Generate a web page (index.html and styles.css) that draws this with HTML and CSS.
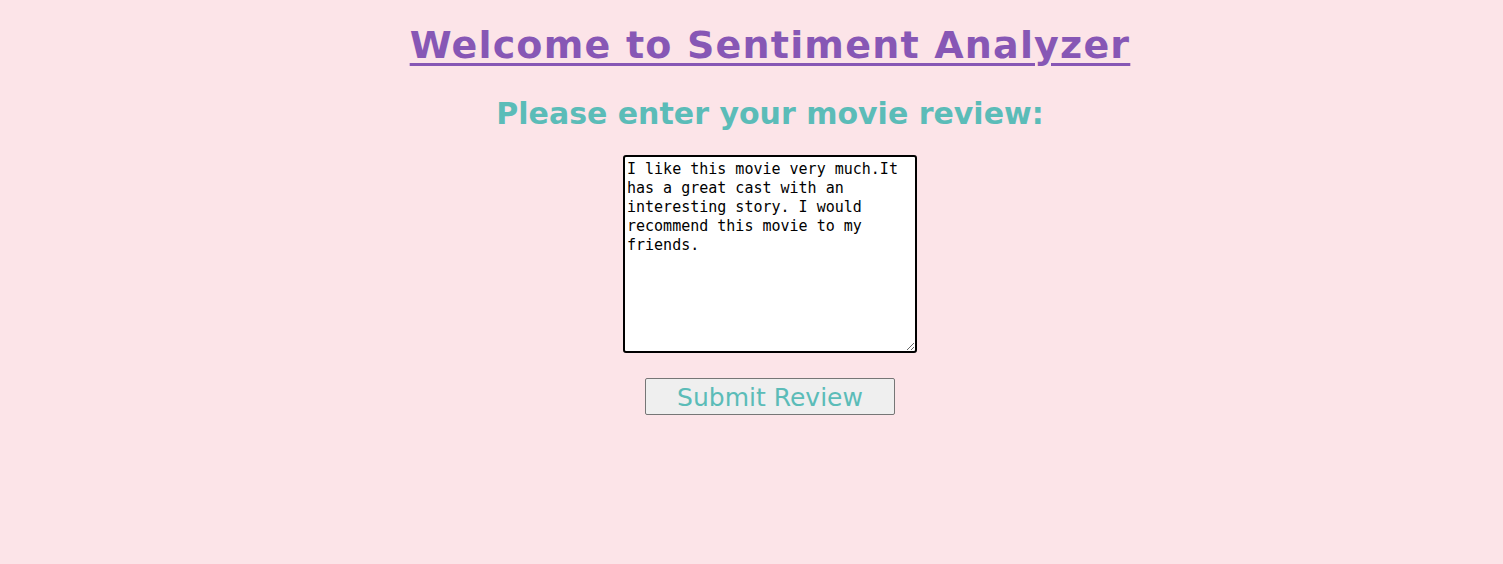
FILE: index.html
```html
<!DOCTYPE html>
<html>
<head>
<meta charset="utf-8">
<link rel="stylesheet" href="styles.css">
</head>
<body>
<main class="page">
  <h1 class="title">Welcome to Sentiment Analyzer</h1>
  <h2 class="subtitle">Please enter your movie review:</h2>
  <form class="review-form">
    <textarea class="review-input">I like this movie very much.It has a great cast with an interesting story. I would recommend this movie to my friends.</textarea>
    <button type="button" class="submit-btn">Submit Review</button>
  </form>
</main>
</body>
</html>
```
FILE: styles.css
```css
html, body {
  margin: 0;
  padding: 0;
}
body {
  background: #fce4e8;
  font-family: "DejaVu Sans", Verdana, sans-serif;
  height: 564px;
}
.page {
  display: flex;
  flex-direction: column;
  align-items: center;
  padding-top: 23px;
  padding-left: 37px;
}
.title {
  margin: 0;
  font-size: 38px;
  letter-spacing: 1.2px;
  font-weight: bold;
  color: #8757b5;
  text-decoration: underline;
  text-decoration-thickness: 3px;
  text-underline-offset: 5px;
  line-height: 44px;
}
.subtitle {
  margin: 29px 0 0 0;
  font-size: 30px;
  font-weight: bold;
  color: #5bbcb8;
  line-height: 36px;
}
.review-form {
  display: flex;
  flex-direction: column;
  align-items: center;
  margin-top: 23px;
}
.review-input {
  box-sizing: border-box;
  width: 294px;
  height: 198px;
  border: 2px solid #000;
  border-radius: 3px;
  padding: 3px 2px;
  font-family: "DejaVu Sans Mono", "Liberation Mono", monospace;
  font-size: 15px;
  line-height: 19px;
  color: #000;
  background: #fff;
  outline: none;
  resize: both;
}
.submit-btn {
  box-sizing: border-box;
  margin-top: 25px;
  width: 250px;
  height: 37px;
  background: #efefef;
  border: 1px solid #767676;
  border-radius: 2px;
  font-family: "DejaVu Sans", Verdana, sans-serif;
  font-size: 25px;
  color: #5bbcb8;
  padding: 2px 0 0 0;
}
```
